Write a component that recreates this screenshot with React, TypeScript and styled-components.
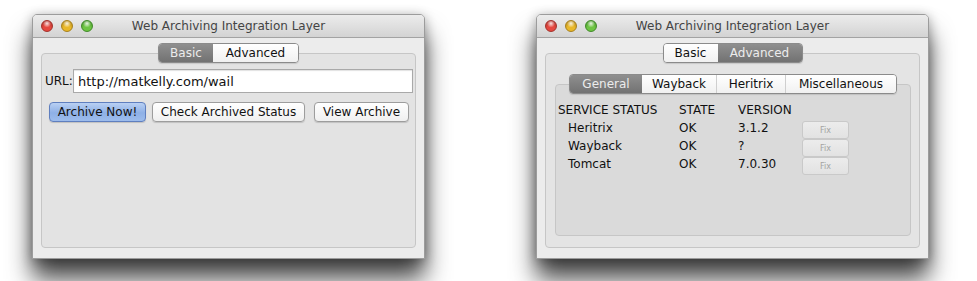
import { Fragment } from "react";
import styled, { createGlobalStyle } from "styled-components";

const GlobalStyle = createGlobalStyle`
  body {
    margin: 0;
    background: #ffffff;
    font-family: "DejaVu Sans", "Liberation Sans", sans-serif;
    color: #111;
  }
`;

const Page = styled.div`
  display: flex;
  align-items: flex-start;
  gap: 111px;
  padding: 14px 0 0 32px;
  min-height: 281px;
  box-sizing: border-box;
`;

const Window = styled.div`
  width: 393px;
  height: 245px;
  display: flex;
  flex-direction: column;
  border-radius: 5px 5px 1px 1px;
  border: 1px solid #9c9c9c;
  box-sizing: border-box;
  box-shadow: 0 20px 24px rgba(0, 0, 0, 0.72), 0 2px 12px rgba(0, 0, 0, 0.32);
  overflow: hidden;
  background: #ececec;
`;

const TitleBar = styled.div`
  height: 22px;
  flex: none;
  display: grid;
  grid-template-columns: 1fr auto 1fr;
  align-items: center;
  background: linear-gradient(#ececec, #d3d3d3);
  border-bottom: 1px solid #a3a3a3;
  padding: 0 8px;
`;

const Lights = styled.div`
  display: flex;
  gap: 8px;
`;

const Light = styled.span<{ $color: string; $edge: string }>`
  width: 12px;
  height: 12px;
  border-radius: 50%;
  box-sizing: border-box;
  border: 1px solid ${(p) => p.$edge};
  background: radial-gradient(
      circle at 50% 25%,
      rgba(255, 255, 255, 0.85) 0,
      rgba(255, 255, 255, 0) 45%
    ),
    radial-gradient(circle at 50% 80%, ${(p) => p.$color} 40%, ${(p) => p.$edge} 100%);
`;

const Title = styled.div`
  font-size: 12px;
  color: #444;
  white-space: nowrap;
`;

const Body = styled.div`
  flex: 1;
  display: flex;
  flex-direction: column;
  padding: 5px 8px 10px;
  background: #ececec;
`;

const Segmented = styled.div`
  align-self: center;
  display: flex;
  height: 20px;
  box-sizing: border-box;
  border: 1px solid #8b8b8b;
  border-radius: 4px;
  overflow: hidden;
  position: relative;
  z-index: 1;
  box-shadow: 0 1px 1px rgba(0, 0, 0, 0.12);
`;

const Segment = styled.div<{ $active?: boolean; $width: number; $sep?: boolean }>`
  width: ${(p) => p.$width}px;
  display: flex;
  align-items: center;
  justify-content: center;
  font-size: 12px;
  box-sizing: border-box;
  border-left: ${(p) => (p.$sep ? "1px solid #cfcfcf" : "none")};
  color: ${(p) => (p.$active ? "#ececec" : "#111")};
  background: ${(p) =>
    p.$active
      ? "linear-gradient(#8f8f8f, #727272)"
      : "linear-gradient(#ffffff, #f1f1f1)"};
`;

const GroupBox = styled.div<{ $fill: string; $pad: string }>`
  flex: 1;
  display: flex;
  flex-direction: column;
  margin-top: -10px;
  border: 1px solid #c6c6c6;
  border-radius: 4px;
  background: ${(p) => p.$fill};
  padding: ${(p) => p.$pad};
`;

const UrlRow = styled.div`
  display: flex;
  align-items: center;
`;

const Label = styled.span`
  font-size: 12px;
  width: 28px;
`;

const UrlInput = styled.div`
  flex: 1;
  height: 24px;
  box-sizing: border-box;
  border: 1px solid #a9a9a9;
  background: #ffffff;
  font-size: 13px;
  display: flex;
  align-items: center;
  padding-left: 4px;
  box-shadow: inset 0 1px 1px rgba(0, 0, 0, 0.12);
`;

const ButtonRow = styled.div`
  display: flex;
  margin: 9px 0 0 4px;
`;

const PushButton = styled.div<{ $primary?: boolean; $width: number; $gap: number }>`
  width: ${(p) => p.$width}px;
  margin-right: ${(p) => p.$gap}px;
  height: 20px;
  box-sizing: border-box;
  display: flex;
  align-items: center;
  justify-content: center;
  font-size: 12px;
  border-radius: 4px;
  border: 1px solid ${(p) => (p.$primary ? "#5f7fbf" : "#9d9d9d")};
  background: ${(p) =>
    p.$primary
      ? "linear-gradient(#b9d0f3, #8eb0e6 55%, #9dbcec)"
      : "linear-gradient(#ffffff, #f0f0f0)"};
  box-shadow: 0 1px 1px rgba(0, 0, 0, 0.15);
`;

const StatusGrid = styled.div`
  display: grid;
  grid-template-columns: 121px 59px 64px 47px;
  grid-auto-rows: 18px;
  align-items: center;
  font-size: 12px;
`;

const Cell = styled.span<{ $indent?: boolean }>`
  padding-left: ${(p) => (p.$indent ? 10 : 0)}px;
  white-space: nowrap;
`;

const FixButton = styled.div`
  height: 18px;
  box-sizing: border-box;
  transform: translateY(2px);
  display: flex;
  align-items: center;
  justify-content: center;
  font-size: 8px;
  color: #a3a3a3;
  border: 1px solid #c9c9c9;
  border-radius: 3px;
  background: linear-gradient(#ececec, #e2e2e2);
`;

const services = [
  { name: "Heritrix", state: "OK", version: "3.1.2" },
  { name: "Wayback", state: "OK", version: "?" },
  { name: "Tomcat", state: "OK", version: "7.0.30" },
];

const TitleBarRow = () => (
  <TitleBar>
    <Lights>
      <Light $color="#e5483f" $edge="#a3302a" />
      <Light $color="#e9b829" $edge="#a7801b" />
      <Light $color="#6ec543" $edge="#3f8a27" />
    </Lights>
    <Title>Web Archiving Integration Layer</Title>
    <span />
  </TitleBar>
);

const App = () => {
  return (
    <>
      <GlobalStyle />
      <Page>
        <Window>
          <TitleBarRow />
          <Body>
            <Segmented>
              <Segment $active $width={54}>Basic</Segment>
              <Segment $width={85}>Advanced</Segment>
            </Segmented>
            <GroupBox $fill="#e3e3e3" $pad="15px 2px 0 3px">
              <UrlRow>
                <Label>URL:</Label>
                <UrlInput>http://matkelly.com/wail</UrlInput>
              </UrlRow>
              <ButtonRow>
                <PushButton $primary $width={97} $gap={6}>
                  Archive Now!
                </PushButton>
                <PushButton $width={153} $gap={9}>
                  Check Archived Status
                </PushButton>
                <PushButton $width={95} $gap={0}>
                  View Archive
                </PushButton>
              </ButtonRow>
            </GroupBox>
          </Body>
        </Window>

        <Window>
          <TitleBarRow />
          <Body>
            <Segmented>
              <Segment $width={54}>Basic</Segment>
              <Segment $active $width={84}>Advanced</Segment>
            </Segmented>
            <GroupBox $fill="#e4e4e4" $pad="20px 8px 11px 9px">
              <Segmented>
                <Segment $active $width={72}>General</Segment>
                <Segment $width={74}>Wayback</Segment>
                <Segment $width={69} $sep>Heritrix</Segment>
                <Segment $width={111} $sep>Miscellaneous</Segment>
              </Segmented>
              <GroupBox $fill="#dadada" $pad="16px 0 0 2px">
                <StatusGrid>
                  <Cell>SERVICE STATUS</Cell>
                  <Cell>STATE</Cell>
                  <Cell>VERSION</Cell>
                  <span />
                  {services.map((s) => (
                    <Fragment key={s.name}>
                      <Cell $indent>{s.name}</Cell>
                      <Cell>{s.state}</Cell>
                      <Cell>{s.version}</Cell>
                      <FixButton>Fix</FixButton>
                    </Fragment>
                  ))}
                </StatusGrid>
              </GroupBox>
            </GroupBox>
          </Body>
        </Window>
      </Page>
    </>
  );
};

export default App;
